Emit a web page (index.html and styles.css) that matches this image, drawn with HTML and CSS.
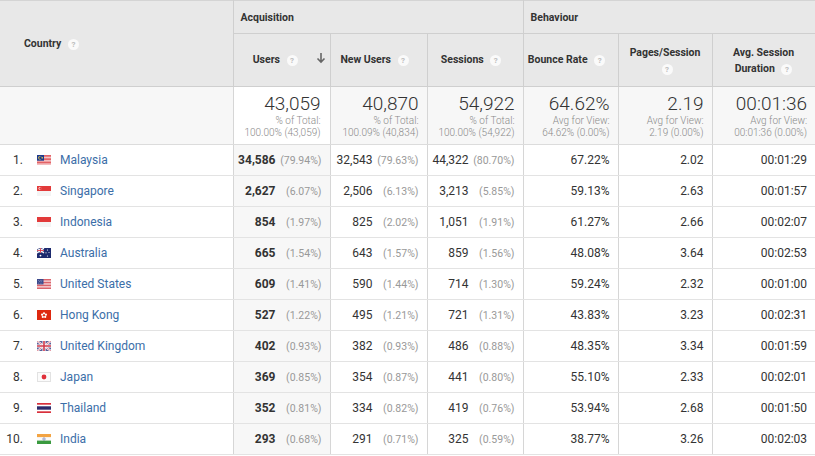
FILE: index.html
```html
<!DOCTYPE html>
<html>
<head>
<meta charset="utf-8">
<link rel="stylesheet" href="styles.css">
</head>
<body>
<table class="report">
  <colgroup>
    <col class="c-country">
    <col class="c-users">
    <col class="c-new">
    <col class="c-sess">
    <col class="c-bounce">
    <col class="c-pages">
    <col class="c-dur">
  </colgroup>
  <thead>
    <tr class="hrow1">
      <th rowspan="2" class="h-country">Country <span class="help">?</span></th>
      <th colspan="3" class="h-group">Acquisition</th>
      <th colspan="3" class="h-group">Behaviour</th>
    </tr>
    <tr class="hrow2">
      <th class="h-metric h-users">Users <span class="help">?</span><svg class="sort" width="10" height="12" viewBox="0 0 10 12"><path d="M5 1v9M1.5 6.5L5 10l3.5-3.5" fill="none" stroke="#666" stroke-width="1.6"/></svg></th>
      <th class="h-metric">New Users <span class="help">?</span></th>
      <th class="h-metric">Sessions <span class="help">?</span></th>
      <th class="h-metric">Bounce Rate <span class="help">?</span></th>
      <th class="h-metric h-wrap">Pages/Session<br><span class="help">?</span></th>
      <th class="h-metric h-wrap">Avg. Session<br>Duration <span class="help">?</span></th>
    </tr>
  </thead>
  <tbody>
    <tr class="totals">
      <td class="t-country"></td>
      <td class="t-sorted"><div class="big">43,059</div><div class="sub">% of Total:</div><div class="sub">100.00% (43,059)</div></td>
      <td><div class="big">40,870</div><div class="sub">% of Total:</div><div class="sub">100.09% (40,834)</div></td>
      <td><div class="big">54,922</div><div class="sub">% of Total:</div><div class="sub">100.00% (54,922)</div></td>
      <td><div class="big">64.62%</div><div class="sub">Avg for View:</div><div class="sub">64.62% (0.00%)</div></td>
      <td><div class="big">2.19</div><div class="sub">Avg for View:</div><div class="sub">2.19 (0.00%)</div></td>
      <td><div class="big">00:01:36</div><div class="sub">Avg for View:</div><div class="sub">00:01:36 (0.00%)</div></td>
    </tr>

    <tr>
      <td class="country"><span class="idx">1.</span><svg class="flag" viewBox="0 0 14 10"><rect width="14" height="10" fill="#fff"/><g fill="#d8262c"><rect y="0" width="14" height="0.72"/><rect y="1.43" width="14" height="0.72"/><rect y="2.86" width="14" height="0.72"/><rect y="4.29" width="14" height="0.72"/><rect y="5.72" width="14" height="0.72"/><rect y="7.15" width="14" height="0.72"/><rect y="8.58" width="14" height="0.72"/></g><rect width="7" height="5.7" fill="#1d3b8f"/><circle cx="3" cy="2.85" r="1.8" fill="#f4d03f"/><circle cx="3.6" cy="2.85" r="1.5" fill="#1d3b8f"/><circle cx="5.2" cy="2.85" r="0.8" fill="#f4d03f"/></svg><a class="name">Malaysia</a></td>
      <td class="sorted"><b>34,586</b><span class="pct">(79.94%)</span></td>
      <td>32,543<span class="pct">(79.63%)</span></td>
      <td>44,322<span class="pct">(80.70%)</span></td>
      <td>67.22%</td>
      <td>2.02</td>
      <td>00:01:29</td>
    </tr>
    <tr>
      <td class="country"><span class="idx">2.</span><svg class="flag" viewBox="0 0 14 10"><rect width="14" height="10" fill="#f4f4f4"/><rect width="14" height="5" fill="#e23a3a"/><circle cx="3" cy="2.5" r="1.4" fill="#fff"/><circle cx="3.5" cy="2.5" r="1.2" fill="#e23a3a"/></svg><a class="name">Singapore</a></td>
      <td class="sorted"><b>2,627</b><span class="pct">(6.07%)</span></td>
      <td>2,506<span class="pct">(6.13%)</span></td>
      <td>3,213<span class="pct">(5.85%)</span></td>
      <td>59.13%</td>
      <td>2.63</td>
      <td>00:01:57</td>
    </tr>
    <tr>
      <td class="country"><span class="idx">3.</span><svg class="flag" viewBox="0 0 14 10"><rect width="14" height="10" fill="#f4f4f4"/><rect width="14" height="5" fill="#e23a3a"/></svg><a class="name">Indonesia</a></td>
      <td class="sorted"><b>854</b><span class="pct">(1.97%)</span></td>
      <td>825<span class="pct">(2.02%)</span></td>
      <td>1,051<span class="pct">(1.91%)</span></td>
      <td>61.27%</td>
      <td>2.66</td>
      <td>00:02:07</td>
    </tr>
    <tr>
      <td class="country"><span class="idx">4.</span><svg class="flag" viewBox="0 0 14 10"><rect width="14" height="10" fill="#1c2a6e"/><path d="M0 0l7 5M7 0L0 5" stroke="#fff" stroke-width="1.2"/><path d="M3.5 0v5M0 2.5h7" stroke="#fff" stroke-width="1.6"/><path d="M3.5 0v5M0 2.5h7" stroke="#d52b3c" stroke-width="0.8"/><circle cx="3.5" cy="7.6" r="0.9" fill="#fff"/><circle cx="10.5" cy="2" r="0.6" fill="#fff"/><circle cx="9" cy="4.8" r="0.6" fill="#fff"/><circle cx="12" cy="4.5" r="0.5" fill="#fff"/><circle cx="10.5" cy="8" r="0.6" fill="#fff"/></svg><a class="name">Australia</a></td>
      <td class="sorted"><b>665</b><span class="pct">(1.54%)</span></td>
      <td>643<span class="pct">(1.57%)</span></td>
      <td>859<span class="pct">(1.56%)</span></td>
      <td>48.08%</td>
      <td>3.64</td>
      <td>00:02:53</td>
    </tr>
    <tr>
      <td class="country"><span class="idx">5.</span><svg class="flag" viewBox="0 0 14 10"><rect width="14" height="10" fill="#fff"/><g fill="#d0343f"><rect y="0" width="14" height="0.77"/><rect y="1.54" width="14" height="0.77"/><rect y="3.08" width="14" height="0.77"/><rect y="4.62" width="14" height="0.77"/><rect y="6.16" width="14" height="0.77"/><rect y="7.7" width="14" height="0.77"/><rect y="9.24" width="14" height="0.77"/></g><rect width="6.5" height="5.4" fill="#3c4a8c"/><g fill="#c8cde6"><circle cx="1.5" cy="1.3" r="0.4"/><circle cx="3.2" cy="1.3" r="0.4"/><circle cx="4.9" cy="1.3" r="0.4"/><circle cx="2.4" cy="2.7" r="0.4"/><circle cx="4.1" cy="2.7" r="0.4"/><circle cx="1.5" cy="4.1" r="0.4"/><circle cx="3.2" cy="4.1" r="0.4"/><circle cx="4.9" cy="4.1" r="0.4"/></g></svg><a class="name">United States</a></td>
      <td class="sorted"><b>609</b><span class="pct">(1.41%)</span></td>
      <td>590<span class="pct">(1.44%)</span></td>
      <td>714<span class="pct">(1.30%)</span></td>
      <td>59.24%</td>
      <td>2.32</td>
      <td>00:01:00</td>
    </tr>
    <tr>
      <td class="country"><span class="idx">6.</span><svg class="flag" viewBox="0 0 14 10"><rect width="14" height="10" fill="#de2910"/><g fill="#fff"><circle cx="7" cy="3.3" r="1.1"/><circle cx="8.9" cy="4.7" r="1.1"/><circle cx="8.2" cy="6.9" r="1.1"/><circle cx="5.8" cy="6.9" r="1.1"/><circle cx="5.1" cy="4.7" r="1.1"/></g><circle cx="7" cy="5.3" r="0.6" fill="#de2910"/></svg><a class="name">Hong Kong</a></td>
      <td class="sorted"><b>527</b><span class="pct">(1.22%)</span></td>
      <td>495<span class="pct">(1.21%)</span></td>
      <td>721<span class="pct">(1.31%)</span></td>
      <td>43.83%</td>
      <td>3.23</td>
      <td>00:02:31</td>
    </tr>
    <tr>
      <td class="country"><span class="idx">7.</span><svg class="flag" viewBox="0 0 14 10"><rect width="14" height="10" fill="#5b5f97"/><path d="M0 0l14 10M14 0L0 10" stroke="#fff" stroke-width="2"/><path d="M0 0l14 10M14 0L0 10" stroke="#d0596a" stroke-width="0.7"/><path d="M7 0v10M0 5h14" stroke="#fff" stroke-width="3"/><path d="M7 0v10M0 5h14" stroke="#d0394a" stroke-width="1.6"/></svg><a class="name">United Kingdom</a></td>
      <td class="sorted"><b>402</b><span class="pct">(0.93%)</span></td>
      <td>382<span class="pct">(0.93%)</span></td>
      <td>486<span class="pct">(0.88%)</span></td>
      <td>48.35%</td>
      <td>3.34</td>
      <td>00:01:59</td>
    </tr>
    <tr>
      <td class="country"><span class="idx">8.</span><svg class="flag" viewBox="0 0 14 10"><rect x="0.5" y="0.5" width="13" height="9" fill="#fbfbfb" stroke="#e2e2e2"/><circle cx="7" cy="5" r="2.4" fill="#e0303a"/></svg><a class="name">Japan</a></td>
      <td class="sorted"><b>369</b><span class="pct">(0.85%)</span></td>
      <td>354<span class="pct">(0.87%)</span></td>
      <td>441<span class="pct">(0.80%)</span></td>
      <td>55.10%</td>
      <td>2.33</td>
      <td>00:02:01</td>
    </tr>
    <tr>
      <td class="country"><span class="idx">9.</span><svg class="flag" viewBox="0 0 14 10"><rect width="14" height="10" fill="#d8303c"/><rect y="1.7" width="14" height="6.6" fill="#fff"/><rect y="3.3" width="14" height="3.4" fill="#2d2a6a"/></svg><a class="name">Thailand</a></td>
      <td class="sorted"><b>352</b><span class="pct">(0.81%)</span></td>
      <td>334<span class="pct">(0.82%)</span></td>
      <td>419<span class="pct">(0.76%)</span></td>
      <td>53.94%</td>
      <td>2.68</td>
      <td>00:01:50</td>
    </tr>
    <tr>
      <td class="country"><span class="idx">10.</span><svg class="flag" viewBox="0 0 14 10"><rect width="14" height="3.4" fill="#f3a443"/><rect y="3.3" width="14" height="3.4" fill="#fafafa"/><rect y="6.6" width="14" height="3.4" fill="#3a9a3f"/><circle cx="7" cy="5" r="1.2" fill="none" stroke="#3a4a9a" stroke-width="0.5"/></svg><a class="name">India</a></td>
      <td class="sorted"><b>293</b><span class="pct">(0.68%)</span></td>
      <td>291<span class="pct">(0.71%)</span></td>
      <td>325<span class="pct">(0.59%)</span></td>
      <td>38.77%</td>
      <td>3.26</td>
      <td>00:02:03</td>
    </tr>
  </tbody>
</table>
</body>
</html>
```

FILE: styles.css
```css
html, body {
  margin: 0;
  padding: 0;
  background: #fff;
}

.report {
  border-collapse: collapse;
  table-layout: fixed;
  width: 815px;
  font-family: Roboto, "Liberation Sans", Arial, sans-serif;
  color: #333;
  font-size: 12px;
}

.c-country { width: 233px; }
.c-users { width: 97px; }
.c-new { width: 97px; }
.c-sess { width: 96px; }
.c-bounce { width: 95px; }
.c-pages { width: 94px; }
.c-dur { width: 103px; }

th {
  background: #e8e8e8;
  border: 1px solid #cfcfcf;
  font-size: 10.5px;
  font-weight: 700;
  color: #333;
  padding: 0;
  vertical-align: middle;
}

.hrow1 th { border-top: 1px solid #d4d4d4; }
.hrow1 { height: 33px; }
.hrow2 { height: 53px; }

.h-country {
  text-align: left;
  padding-left: 24px;
  border-left: none;
}

.h-group {
  text-align: left;
  padding-left: 7px;
}

.h-metric {
  text-align: center;
  padding-right: 8px;
  line-height: 16px;
}

.h-wrap {
  padding-right: 0;
  padding-top: 1px;
}

.h-users {
  text-align: right;
  padding-right: 4px;
}

.sort {
  display: inline-block;
  vertical-align: -1px;
  margin-left: 18px;
}

.help {
  display: inline-block;
  width: 11px;
  height: 11px;
  border-radius: 50%;
  background: #fafafa;
  color: #bdbdbd;
  font-size: 8px;
  line-height: 11px;
  text-align: center;
  font-weight: 700;
  margin-left: 4px;
  vertical-align: 0;
}

.h-wrap .help { margin-left: 0; }
.h-wrap .help:last-child { margin-left: 4px; }

td {
  border-left: 1px solid #d6d6d6;
  border-bottom: 1px solid #e3e3e3;
  padding: 0 8px 0 0;
  text-align: right;
  vertical-align: middle;
  white-space: nowrap;
}

tbody tr { height: 31px; }

.totals { height: 58px; }
.totals td {
  background: #f7f7f7;
  padding-right: 8px;
  border-bottom: 1px solid #dcdcdc;
}
.totals td.t-sorted { background: #fff; padding-right: 9px; }
.totals td.t-country { border-left: none; }

.big {
  font-size: 19px;
  font-weight: 300;
  line-height: 23px;
  color: #333;
}

.sub {
  font-size: 10px;
  font-weight: 300;
  line-height: 12px;
  color: #8a8a8a;
}

td.country {
  text-align: left;
  border-left: none;
  padding: 0;
}

.idx {
  display: inline-block;
  width: 23px;
  text-align: right;
  color: #333;
}

.flag {
  display: inline-block;
  width: 14px;
  height: 10px;
  margin-left: 14px;
  vertical-align: -1px;
}

.name {
  margin-left: 9px;
  color: #3b6ea8;
  text-decoration: none;
}

td.sorted {
  background: #f7f7f7;
}

td b {
  font-weight: 700;
}

.pct {
  display: inline-block;
  width: 46px;
  text-align: right;
  font-size: 10.5px;
  color: #999;
}
```
